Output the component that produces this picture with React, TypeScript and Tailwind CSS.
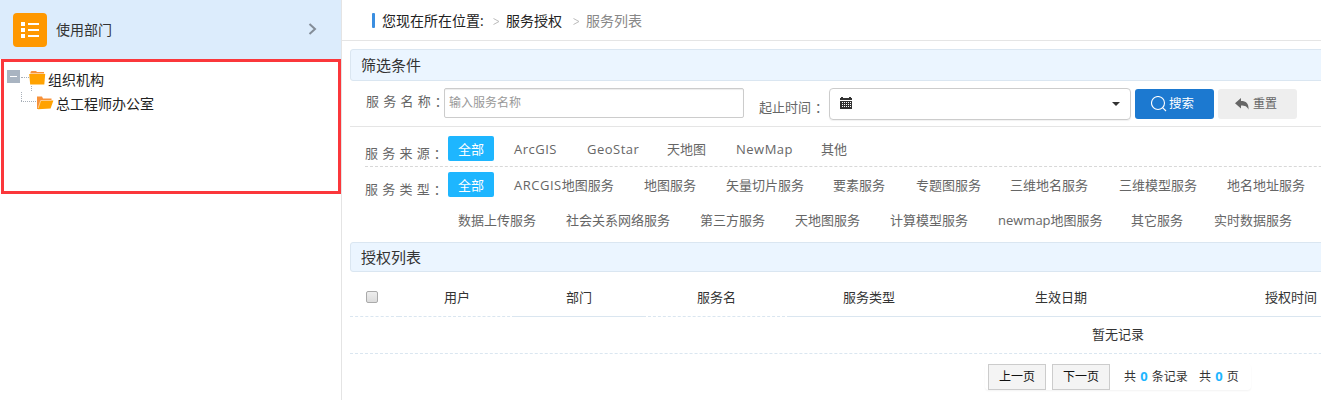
import React from 'react';

type Item = { label: string; latin?: string; cell: string };

const sources: Item[] = [
  { label: '', latin: 'ArcGIS', cell: 'w-[73px]' },
  { label: '', latin: 'GeoStar', cell: 'w-[80px]' },
  { label: '天地图', cell: 'w-[69px]' },
  { label: '', latin: 'NewMap', cell: 'w-[85px]' },
  { label: '其他', cell: 'w-[40px]' },
];

const typesFirst: Item[] = [
  { label: '地图服务', latin: 'ARCGIS', cell: 'w-[130px]' },
  { label: '地图服务', cell: 'w-[82px]' },
  { label: '矢量切片服务', cell: 'w-[107px]' },
  { label: '要素服务', cell: 'w-[83px]' },
  { label: '专题图服务', cell: 'w-[94px]' },
  { label: '三维地名服务', cell: 'w-[109px]' },
  { label: '三维模型服务', cell: 'w-[108px]' },
  { label: '地名地址服务', cell: 'w-[94px]' },
];

const typesSecond: Item[] = [
  { label: '数据上传服务', cell: 'w-[108px]' },
  { label: '社会关系网络服务', cell: 'w-[134px]' },
  { label: '第三方服务', cell: 'w-[95px]' },
  { label: '天地图服务', cell: 'w-[95px]' },
  { label: '计算模型服务', cell: 'w-[108px]' },
  { label: 'newmap地图服务', cell: 'w-[133px]' },
  { label: '其它服务', cell: 'w-[83px]' },
  { label: '实时数据服务', cell: 'w-[94px]' },
];

const columns: Item[] = [
  { label: '用户', cell: 'w-[116px] border-dashed' },
  { label: '部门', cell: 'w-[128px] border-solid' },
  { label: '服务名', cell: 'w-[147px] border-dashed' },
  { label: '服务类型', cell: 'w-[158px] border-solid' },
  { label: '生效日期', cell: 'w-[226px] border-solid' },
  { label: '授权时间', cell: 'w-[234px] border-solid' },
];

function Items({ items }: { items: Item[] }) {
  return (
    <>
      {items.map((i) => (
        <span key={(i.latin ?? '') + i.label} className={`shrink-0 ${i.cell}`}>
          {i.latin && <span className="tracking-[0.5px]">{i.latin}</span>}
          {i.label}
        </span>
      ))}
    </>
  );
}

function AllTag() {
  return (
    <span className="mr-5 flex h-[25px] w-[46px] shrink-0 items-center justify-center rounded-[2px] bg-[#1eb6ff] text-white">
      全部
    </span>
  );
}

function SpacedLabel({ text, className }: { text: string; className: string }) {
  return (
    <label className={`shrink-0 whitespace-nowrap leading-5 [word-spacing:0.9px] ${className}`}>
      {text}
      <span className="ml-[4px]">：</span>
    </label>
  );
}

function Folder({ open }: { open?: boolean }) {
  return open ? (
    <svg width="17" height="14" viewBox="0 0 17 14" className="shrink-0">
      <path d="M0 13V.500h5l1 2h8.500V5H4L1.500 13z" fill="#f7923a" />
      <path d="M3.200 5.500L4.500 4.500H16.400L13.600 12.500L1 13.200z" fill="#ffa200" />
      <path d="M1.200 12L3.700 4.500H14.500" fill="none" stroke="#fde3bf" strokeWidth=".7" />
    </svg>
  ) : (
    <svg width="17" height="14" viewBox="0 0 17 14" className="shrink-0">
      <path d="M1.500 3V1L2.500 0h4.500l1 1H15V4H1.500z" fill="#f7923a" />
      <path d="M1 2.500h14.500" stroke="#fde3bf" strokeWidth=".7" />
      <path d="M.200 3h16L15.300 13.500H1.200z" fill="#ffa200" />
    </svg>
  );
}

function Sidebar() {
  return (
    <aside className="h-[400px] w-[342px] shrink-0 border-r border-[#e4e4e4]">
      <div className="flex h-[59px] items-center bg-[#dcecfc] pl-[13px] pr-[24px]">
        <span className="flex size-[34px] items-center justify-center rounded-[4px] bg-[#ff9800]">
          <svg width="18" height="16" viewBox="0 0 18 16" fill="#fff">
            <path d="M0 0h4v4H0zM0 6h4v4H0zM0 12h4v4H0zM7 1h11v2H7zM7 7h11v2H7zM7 13h11v2H7z" />
          </svg>
        </span>
        <span className="ml-[9px] flex-1 text-sm leading-5 text-[#333]">使用部门</span>
        <svg width="9" height="12" viewBox="0 0 9 12" fill="none" stroke="#848d98" strokeWidth="2" className="mb-px">
          <path d="M1.500 1l5.500 5-5.500 5" />
        </svg>
      </div>
      <div className="ml-px h-[135px] w-[340px] border-[3px] border-[#fb373b] pl-[3px] pt-[6px] text-sm text-[#222]">
        <div className="flex h-6 items-center">
          <span className="mb-[7px] flex size-[13px] items-center justify-center bg-[#a9b4c1]">
            <span className="h-px w-[7px] bg-white" />
          </span>
          <span className="mb-[5px] ml-px w-[8px] border-t border-dotted border-[#a8afb8]" />
          <span className="mb-[5px] flex"><Folder /></span>
          <span className="ml-[2px] leading-6">组织机构</span>
        </div>
        <div className="flex h-6 items-center">
          <svg width="30" height="24" viewBox="0 0 30 24" fill="none" stroke="#a8afb8" strokeDasharray="1 1" className="overflow-visible">
            <path d="M24.500-6v6M14.500 0v10M14 9.500h15" />
          </svg>
          <span className="mb-[3px] flex"><Folder open /></span>
          <span className="ml-[2px] leading-6">总工程师办公室</span>
        </div>
      </div>
    </aside>
  );
}

function PanelTitle({ children, size }: { children: React.ReactNode; size: string }) {
  return (
    <h2 className={`flex w-[1536px] items-center rounded-[3px] border border-[#dae6f1] bg-[#ebf5ff] pl-[10px] text-[15px] text-[#333] ${size}`}>
      {children}
    </h2>
  );
}

function Breadcrumb() {
  return (
    <nav className="flex h-[41px] items-center border-b border-[#e5e5e5] pl-[30px] text-sm leading-5 text-[#222]">
      <span className="h-[15px] w-[3px] rounded-[1px] bg-[#3a8ee0]" />
      <span className="ml-[7px] w-[111px] pt-px">您现在所在位置:</span>
      <span className="flex w-[13px] pt-[3px]">
        <svg width="7" height="7" viewBox="0 0 7 7" fill="none" stroke="#bbb"><path d="M.500.500l5.500 3-5.500 3" /></svg>
      </span>
      <span className="w-[67px] pt-px">服务授权</span>
      <span className="flex w-[13px] pt-[3px]">
        <svg width="7" height="7" viewBox="0 0 7 7" fill="none" stroke="#bbb"><path d="M.500.500l5.500 3-5.500 3" /></svg>
      </span>
      <span className="pt-px text-[#888]">服务列表</span>
    </nav>
  );
}

function SearchRow() {
  return (
    <div className="flex h-[46px] w-[1536px] items-start border-b border-[#e5e5e5] pt-[7px] text-[13px] text-[#666]">
      <SpacedLabel text="服 务 名 称" className="ml-4 mt-[3px] w-[78px]" />
      <input
        className="h-[30px] w-[300px] rounded-[2px] border border-[#ccc] px-[4px] pb-px text-xs shadow-[inset_0_1px_1px_rgba(0,0,0,0.075)] outline-none placeholder:text-[#999]"
        placeholder="输入服务名称"
      />
      <label className="ml-[15px] mt-[9px] w-[70px] whitespace-nowrap leading-5">
        起止时间<span className="ml-[4px]">：</span>
      </label>
      <div className="flex h-8 w-[302px] items-center justify-between rounded-[4px] border border-[#ccc] pl-[10px] pr-[10px] shadow-[0_1px_1px_rgba(0,0,0,0.06)]">
        <svg width="12" height="13" viewBox="0 0 12 13" className="mb-[2px]" shapeRendering="crispEdges">
          <path d="M0 1h1V0h2v1h6V0h2v1h1v3H0zM0 4h12v8H0z" fill="#333" />
          <path d="M0 3h12v1H0zM2 5h1v1H2zM4 5h1v1H4zM6 5h1v1H6zM8 5h1v1H8zM10 5h1v1h-1zM2 7h1v1H2zM4 7h1v1H4zM6 7h1v1H6zM8 7h1v1H8zM10 7h1v1h-1zM2 9h1v1H2zM4 9h1v1H4zM6 9h1v1H6zM8 9h1v1H8zM10 9h1v1h-1z" fill="#fff" />
        </svg>
        <svg width="8" height="4" viewBox="0 0 8 4" className="mb-px"><path d="M0 0h8L4 4z" fill="#333" /></svg>
      </div>
      <button className="ml-1 mt-px flex h-[30px] w-[79px] items-center rounded-[3px] bg-[#1c79d0] pl-4 text-[12.5px] text-white">
        <svg width="16" height="16" viewBox="0 0 16 16" fill="none" stroke="#fff" strokeWidth="1.100">
          <circle cx="7" cy="7" r="6.500" />
          <path d="M11.600 11.600l3.400 3.400" />
        </svg>
        <span className="ml-[2px]">搜索</span>
      </button>
      <button className="ml-1 mt-px flex h-[30px] w-[79px] items-center rounded-[3px] bg-[#eee] pl-[17px] text-[12px] text-[#666]">
        <svg width="14" height="12" viewBox="0 0 14 12" className="mb-px">
          <path d="M0 5.200L6 0v3c5 0 8 2.500 7.500 8.800C12.200 8.500 10 7.600 6 7.600v3z" fill="#666" />
        </svg>
        <span className="ml-[4px]">重置</span>
      </button>
    </div>
  );
}

function Filters() {
  return (
    <div className="w-[1536px] text-[13px] leading-5 text-[#666]">
      <div className="ml-[15px] flex h-[40px] items-start border-b border-dashed border-[#d8d8d8] pt-[9px]">
        <SpacedLabel text="服 务 来 源" className="mt-[7px] w-[83px]" />
        <div className="flex items-center"><AllTag /><Items items={sources} /></div>
      </div>
      <div className="ml-[15px] flex items-start pt-[5px]">
        <SpacedLabel text="服 务 类 型" className="mt-[7px] w-[83px]" />
        <div className="flex items-center"><AllTag /><Items items={typesFirst} /></div>
      </div>
      <div className="ml-[108px] mt-[11px] flex h-[32px]"><Items items={typesSecond} /></div>
    </div>
  );
}

function Pager() {
  const button = 'flex h-[26px] w-[58px] items-center justify-center border border-[#ccc] bg-[#f4f4f4] text-[#111]';
  return (
    <div className="ml-[635px] mt-[10px] flex h-[26px] w-[266px] items-center gap-[6px] rounded-[4px] pl-[3px] text-xs text-[#333] shadow-[0_1px_2px_rgba(0,0,0,0.05)]">
      <button className={button}>上一页</button>
      <button className={button}>下一页</button>
      <span className="ml-[8px] w-[69px] whitespace-nowrap [word-spacing:1px]">共 <b className="text-[13px] text-[#1eb6ff]">0</b> 条记录</span>
      <span className="whitespace-nowrap [word-spacing:1px]">共 <b className="text-[13px] text-[#1eb6ff]">0</b> 页</span>
    </div>
  );
}

function Results() {
  return (
    <div className="w-[1536px] text-[13px] text-[#333]">
      <div className="flex h-[45px] pt-[6px]">
        <div className="flex w-[49px] items-center border-b border-dashed border-[#dae6f0] pl-4">
          <input type="checkbox" className="size-3 appearance-none rounded-[2px] border border-[#aaa] bg-linear-to-b from-[#eee] to-[#dcdcdc]" />
        </div>
        {columns.map((c) => (
          <div key={c.label} className={`flex items-center justify-center border-b border-[#dae6f0] pt-px ${c.cell}`}>{c.label}</div>
        ))}
        <div className="flex-1 border-b border-[#dae6f0]" />
      </div>
      <div className="flex h-[37px] items-center justify-center border-b border-dashed border-[#dae6f0]">暂无记录</div>
    </div>
  );
}

export default function App() {
  return (
    <div className="flex h-[400px] w-full overflow-hidden bg-white font-['Open_Sans','Noto_Sans_CJK_SC',sans-serif]">
      <Sidebar />
      <main className="min-w-0 flex-1 overflow-hidden">
        <Breadcrumb />
        <div className="pl-2 pt-2">
          <PanelTitle size="h-8">筛选条件</PanelTitle>
          <SearchRow />
          <Filters />
          <PanelTitle size="h-[30px]">授权列表</PanelTitle>
          <Results />
          <Pager />
        </div>
      </main>
    </div>
  );
}
